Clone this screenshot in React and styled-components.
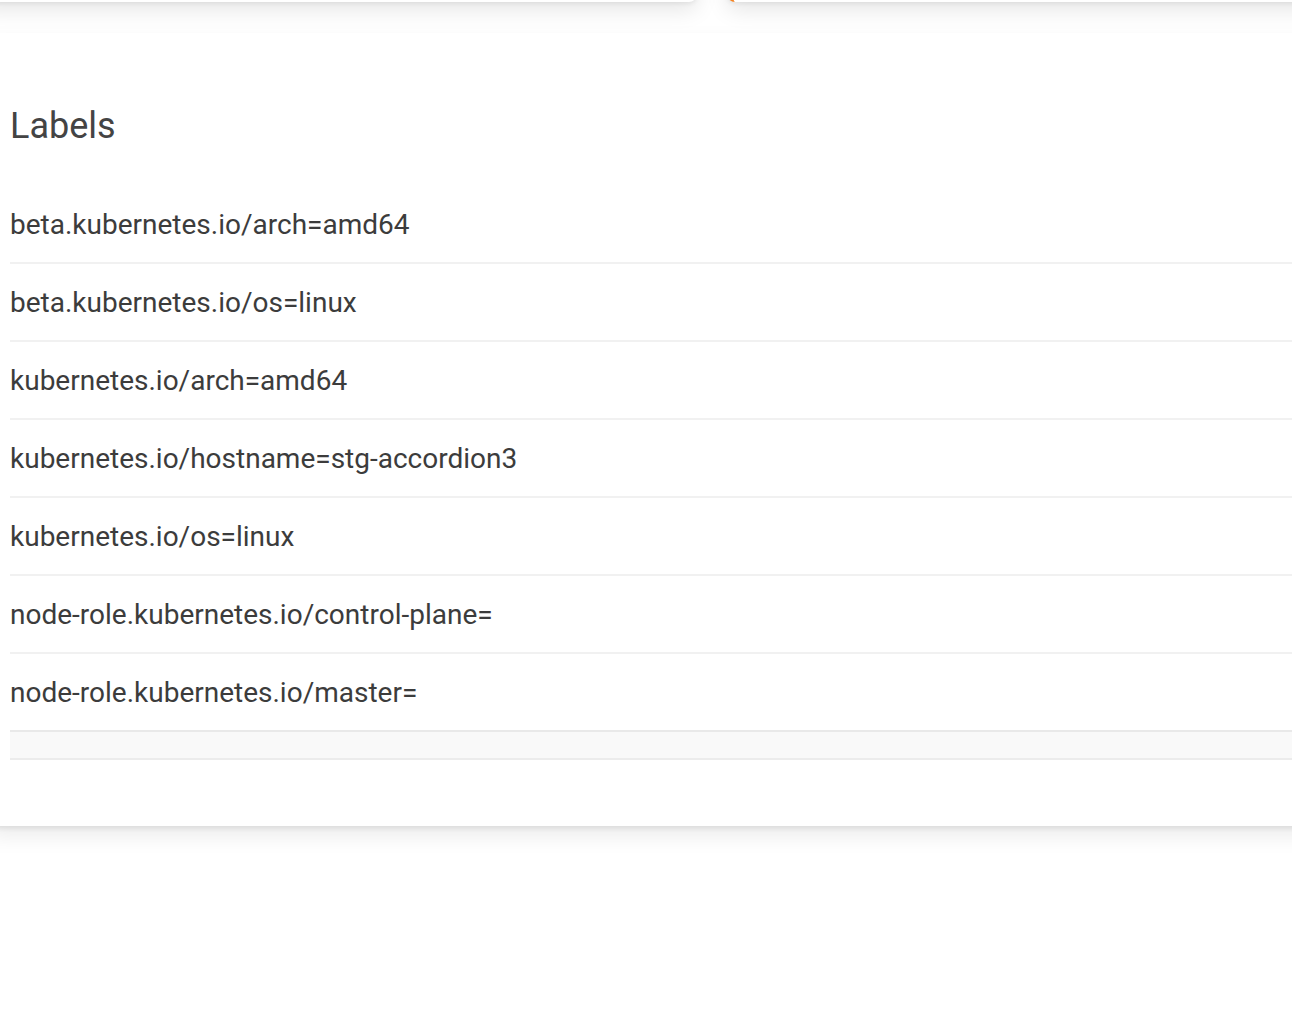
import React from 'react';
import styled, { createGlobalStyle } from 'styled-components';

const GlobalStyle = createGlobalStyle`
  html {
    overflow: hidden;
  }
  body {
    margin: 0;
    padding: 0;
    background: #fff;
    font-family: Roboto, "Liberation Sans", Arial, sans-serif;
    color: #444;
  }
`;

const Page = styled.div`
  display: flex;
  flex-direction: column;
  gap: 31px;
  margin-top: -200px;
  padding-bottom: 60px;
`;

const TopRow = styled.div`
  display: flex;
  gap: 30px;
  margin-left: -20px;
  margin-right: -40px;
`;

const TopCard = styled.div`
  flex: ${p => (p.wide ? '0 0 717px' : '1')};
  height: 202px;
  background: #fff;
  border-radius: 0 0 8px 8px;
  border-left: ${p => (p.accent ? '6px solid #f58220' : 'none')};
  box-shadow: 0 2px 4px rgba(0, 0, 0, 0.06), 0 8px 22px rgba(0, 0, 0, 0.1);
`;

const Card = styled.section`
  background: #fff;
  margin: 0 -40px 0 -10px;
  padding: 72px 0 66px 20px;
  box-shadow: 0 3px 4px rgba(0, 0, 0, 0.07), 0 10px 20px rgba(0, 0, 0, 0.08);
`;

const Title = styled.h2`
  margin: 0 0 39px;
  font-size: 36px;
  font-weight: 400;
  line-height: 42px;
  color: #444;
`;

const List = styled.ul`
  list-style: none;
  margin: 0;
  padding: 0;
`;

const Row = styled.li`
  display: flex;
  align-items: center;
  height: 76px;
  border-bottom: 2px solid #f1f1f1;
  font-size: 28px;
  color: #3c3c3c;
  white-space: nowrap;
`;

const Footer = styled.div`
  height: 26px;
  background: #f9f9f9;
  border-top: 2px solid #e9e9e9;
  border-bottom: 2px solid #ececec;
`;

const labels = [
  'beta.kubernetes.io/arch=amd64',
  'beta.kubernetes.io/os=linux',
  'kubernetes.io/arch=amd64',
  'kubernetes.io/hostname=stg-accordion3',
  'kubernetes.io/os=linux',
  'node-role.kubernetes.io/control-plane=',
  'node-role.kubernetes.io/master=',
];

const App = () => (
  <>
    <GlobalStyle />
    <Page>
      <TopRow>
        <TopCard wide />
        <TopCard accent />
      </TopRow>
      <Card>
        <Title>Labels</Title>
        <List>
          {labels.map((l, i) => (
            <Row key={l} style={i === labels.length - 1 ? { borderBottom: 'none' } : undefined}>
              {l}
            </Row>
          ))}
        </List>
        <Footer />
      </Card>
    </Page>
  </>
);

export default App;
